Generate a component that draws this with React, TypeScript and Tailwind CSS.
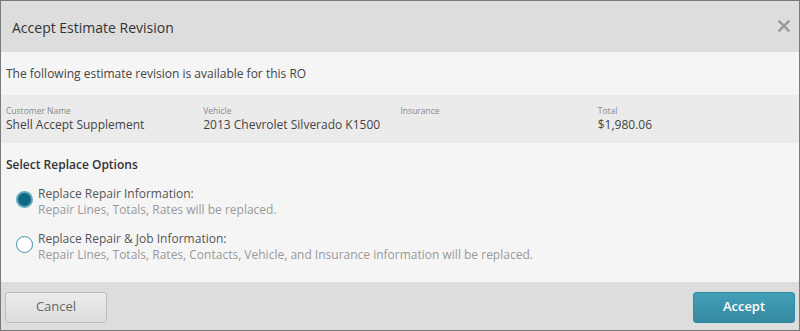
const font = { fontFamily: '"Open Sans", "Noto Sans", sans-serif' }

interface InfoField {
  label: string
  value: string
}

const fields: InfoField[] = [
  { label: 'Customer Name', value: 'Shell Accept Supplement' },
  { label: 'Vehicle', value: '2013 Chevrolet Silverado K1500' },
  { label: 'Insurance', value: '' },
  { label: 'Total', value: '$1,980.06' },
]

const options = [
  {
    title: 'Replace Repair Information:',
    desc: 'Repair Lines, Totals, Rates will be replaced.',
  },
  {
    title: 'Replace Repair & Job Information:',
    desc: 'Repair Lines, Totals, Rates, Contacts, Vehicle, and Insurance information will be replaced.',
  },
]

function Radio({ checked }: { checked: boolean }) {
  return checked ? (
    <span className="w-[17px] h-[17px] rounded-full border-2 border-[#5fa9bc] bg-[#0f6784] shrink-0" />
  ) : (
    <span className="w-[17px] h-[17px] rounded-full border-[1.5px] border-[#3d92a8] bg-white shrink-0" />
  )
}

export default function App() {
  return (
    <div style={font} className="w-[800px] h-[331px] border border-[#7a7a7a] bg-[#f5f5f5] flex flex-col text-[#444]">
      {/* header */}
      <div className="h-[51px] bg-[#dddddd] flex items-center justify-between pl-[11px] pr-[9px] shrink-0">
        <span className="text-[14px] text-[#333] pt-[1px]">Accept Estimate Revision</span>
        <svg width="12" height="12" viewBox="0 0 12 12" className="-mt-[2px]">
          <path d="M1.5 1.5l9 9M10.5 1.5l-9 9" stroke="#9a9a9a" strokeWidth="2.4" strokeLinecap="square" />
        </svg>
      </div>

      <div className="h-[43px] flex items-center pl-[5px] text-[12px] text-[#444] shrink-0 pt-[1px]">
        The following estimate revision is available for this RO
      </div>

      {/* info row */}
      <div className="h-[48px] bg-[#ecebeb] grid grid-cols-4 pl-[5px] pr-[4px] pt-[9px] shrink-0">
        {fields.map((f) => (
          <div key={f.label} className="flex flex-col">
            <span className="text-[8.5px] leading-[13px] text-[#888]">{f.label}</span>
            <span className="text-[12px] leading-[16px] text-[#444]">{f.value}</span>
          </div>
        ))}
      </div>

      <div className="flex-1 pl-[5px] pt-[14px]">
        <div className="text-[12px] font-semibold text-[#333] leading-[16px]">Select Replace Options</div>
        <div className="flex flex-col gap-[13px] mt-[13px] pl-[10px]">
          {options.map((o, i) => (
            <div key={o.title} className="flex items-start gap-[5px]">
              <span className="mt-[5px] flex">
                <Radio checked={i === 0} />
              </span>
              <div className="flex flex-col text-[12px] leading-[16px]">
                <span className="text-[#555]">{o.title}</span>
                <span className="text-[#999]">{o.desc}</span>
              </div>
            </div>
          ))}
        </div>
      </div>

      {/* footer */}
      <div className="h-[48px] bg-[#dddddd] flex items-center justify-between px-[4px] pt-[2px] shrink-0">
        <button className="w-[102px] h-[31px] rounded-[3px] border border-[#bdbdbd] bg-gradient-to-b from-[#ececec] to-[#dcdcdc] text-[13px] text-[#666]">
          Cancel
        </button>
        <button className="w-[102px] h-[31px] rounded-[3px] border border-[#2f8aa3] bg-gradient-to-b from-[#42a0b8] to-[#3589a0] text-[13px] font-semibold text-white">
          Accept
        </button>
      </div>
    </div>
  )
}
